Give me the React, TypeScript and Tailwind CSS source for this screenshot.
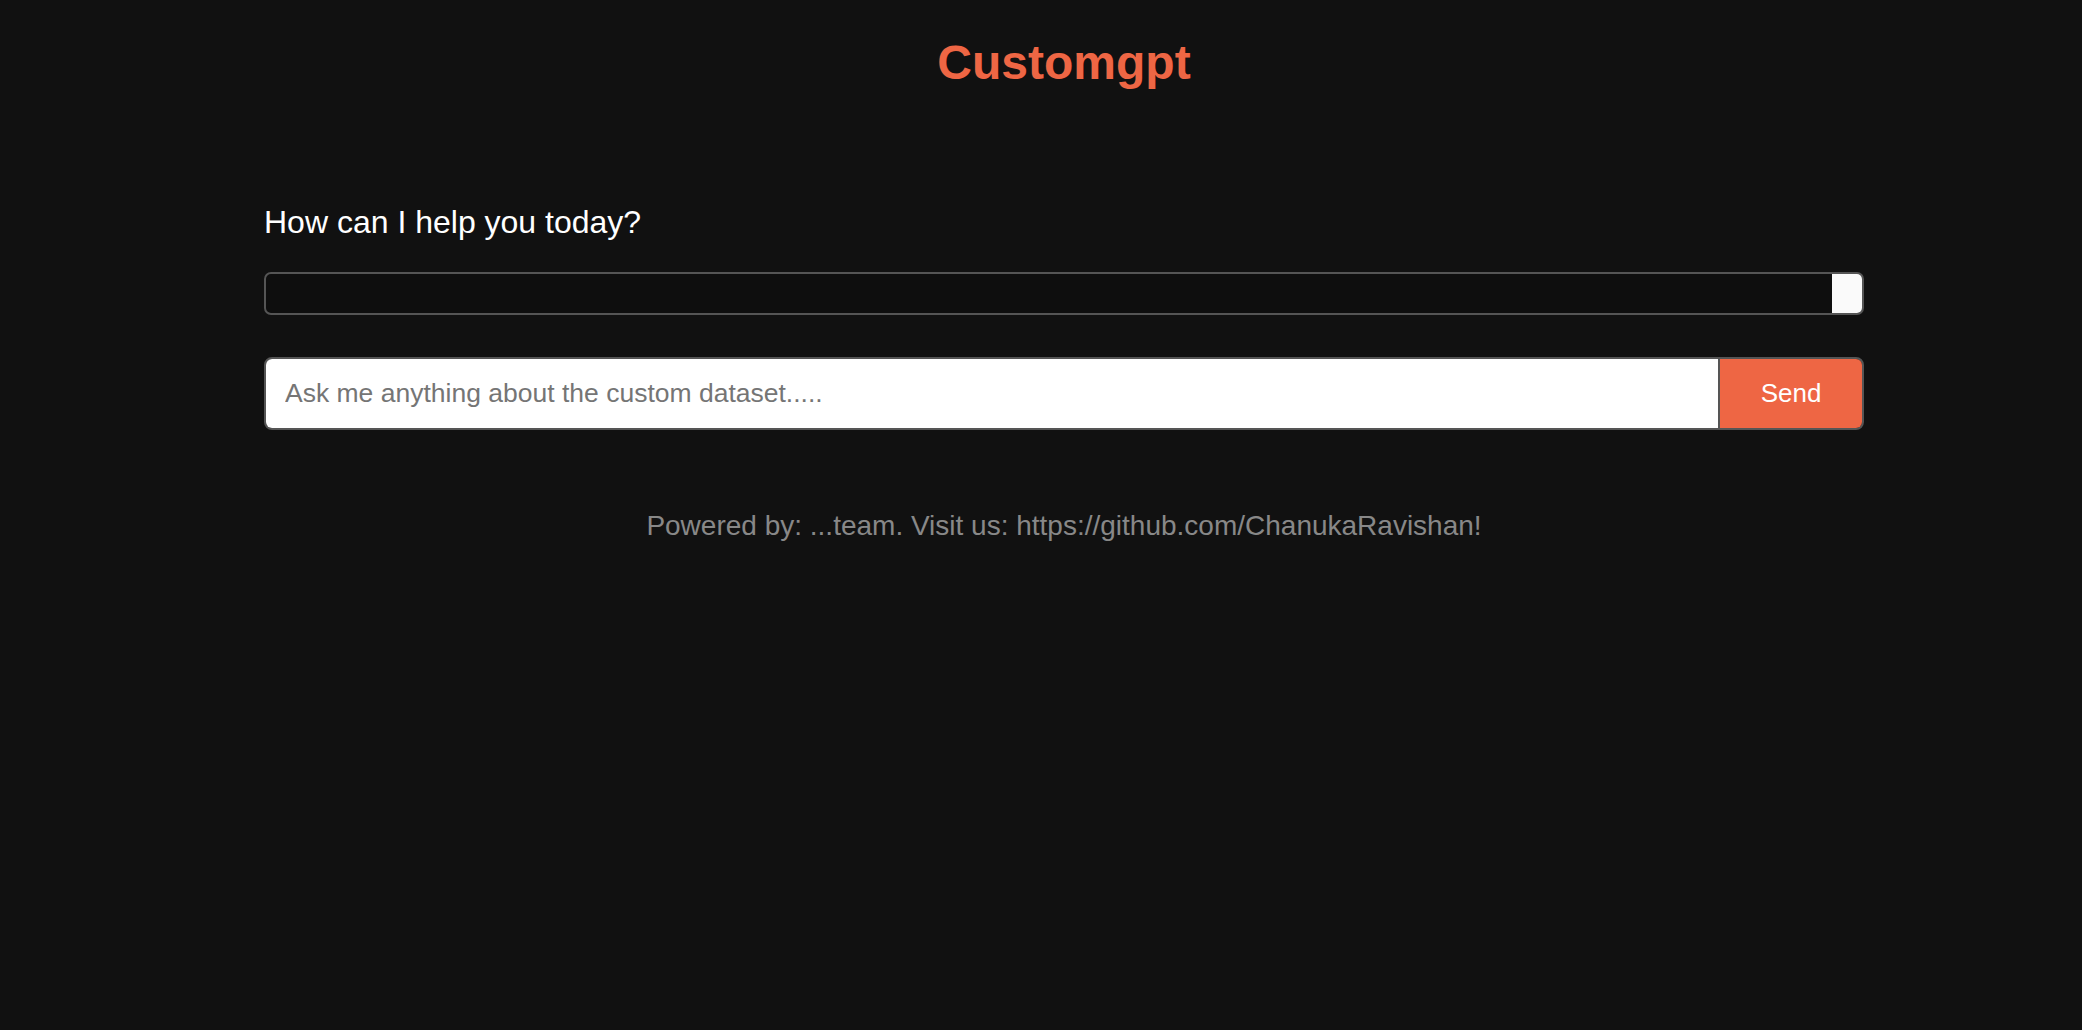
import { useState } from "react";

export default function App() {
  const [question, setQuestion] = useState("");

  return (
    <div className="min-h-screen w-full bg-[#111111] pl-[46px] font-['Liberation_Sans',Arial,sans-serif]">
      <h1 className="pt-[35px] text-center text-[48px] font-bold leading-[1.15] text-[#ee6644]">
        Customgpt
      </h1>

      <main className="mx-auto mt-[114px] w-[1600px]">
        <h2 className="text-[32px] leading-[1.15] text-white">How can I help you today?</h2>

        <div className="mt-[31px] flex h-[43px] overflow-hidden rounded-[7px] border-2 border-[#555555] bg-[#0e0e0e]">
          <div className="flex-1" />
          <div className="w-[30px] bg-[#fafafa]" />
        </div>

        <form
          className="mt-[42px] flex h-[73px] overflow-hidden rounded-[8px] border-2 border-[#555555]"
          onSubmit={(e) => e.preventDefault()}
        >
          <input
            type="text"
            value={question}
            onChange={(e) => setQuestion(e.target.value)}
            placeholder="Ask me anything about the custom dataset....."
            className="flex-1 bg-white px-[19px] text-[26.5px] text-black outline-none placeholder:text-[#757575]"
          />
          <button
            type="submit"
            className="w-[144px] border-l-2 border-[#555555] bg-[#ee6644] text-[26px] text-white"
          >
            Send
          </button>
        </form>

        <p className="mt-[80px] text-center text-[28px] leading-[1.15] text-[#888888]">
          Powered by: ...team. Visit us: https://github.com/ChanukaRavishan!
        </p>
      </main>
    </div>
  );
}
